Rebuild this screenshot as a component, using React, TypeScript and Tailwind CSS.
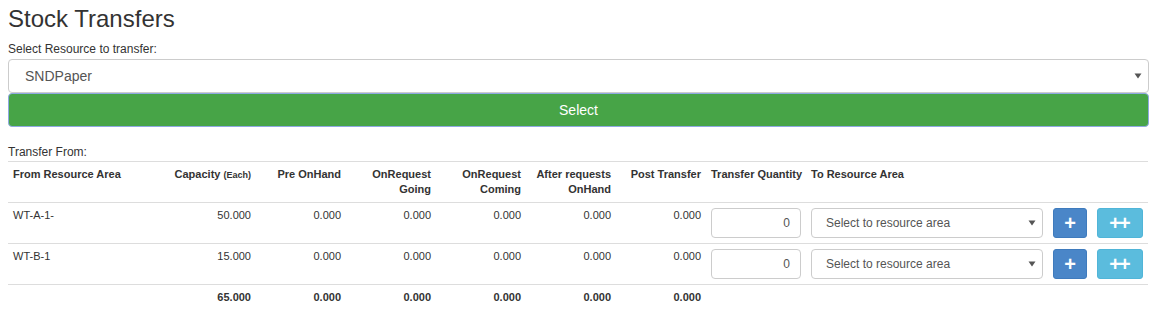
import React from "react";

type Row = {
    area: string;
    capacity: string;
    preOnHand: string;
    going: string;
    coming: string;
    after: string;
    post: string;
};

const rows: Row[] = [
    { area: "WT-A-1-", capacity: "50.000", preOnHand: "0.000", going: "0.000", coming: "0.000", after: "0.000", post: "0.000" },
    { area: "WT-B-1", capacity: "15.000", preOnHand: "0.000", going: "0.000", coming: "0.000", after: "0.000", post: "0.000" },
];

function Caret() {
    return (
        <svg width="8" height="6" viewBox="0 0 8 6" className="absolute top-1/2 -translate-y-1/2 right-[6px]">
            <path d="M0.5 0.5 L7.5 0.5 L4 5.5 Z" fill="#555" />
        </svg>
    );
}

function AreaSelect() {
    return (
        <div className="relative h-[30px] w-[232px] border border-[#ccc] rounded-[4px] bg-white text-[12px] leading-[28px] text-[#555] pl-[14px]">
            Select to resource area
            <Caret />
        </div>
    );
}

/** One line of the transfer table */
function TransferRow({ row }: { row: Row }) {
    const num = "px-[5px] py-[5px] text-right align-top";
    return (
        <tr className="border-t border-[#ddd]">
            <td className="px-[5px] py-[5px] align-top">{row.area}</td>
            <td className={num}>{row.capacity}</td>
            <td className={num}>{row.preOnHand}</td>
            <td className={num}>{row.going}</td>
            <td className={num}>{row.coming}</td>
            <td className={num}>{row.after}</td>
            <td className={num}>{row.post}</td>
            <td className="px-[5px] py-[5px] align-top">
                <div className="h-[30px] w-[90px] border border-[#ccc] rounded-[4px] bg-white text-[12px] leading-[28px] text-[#555] text-right pr-[10px]">
                    0
                </div>
            </td>
            <td className="px-[5px] py-[5px] align-top">
                <AreaSelect />
            </td>
            <td className="px-[5px] py-[5px] align-top">
                <button className="h-[30px] w-[34px] rounded-[3px] bg-[#4a86c8] border border-[#3f7bbd] text-white text-[20px] font-bold leading-[26px]">
                    +
                </button>
            </td>
            <td className="px-[5px] py-[5px] align-top">
                <button className="h-[30px] w-[46px] rounded-[3px] bg-[#5bbcdd] border border-[#50b5d8] text-white text-[20px] font-bold leading-[26px] tracking-[-2px] pr-[2px]">
                    ++
                </button>
            </td>
        </tr>
    );
}

export default function App() {
    const th = "px-[5px] py-[5px] font-bold text-right align-top";
    const foot = "px-[5px] py-[5px] font-bold text-right align-top";
    return (
        <div className="w-[1157px] h-[335px] bg-white px-2 font-['Liberation_Sans',Arial,sans-serif] text-[#333]">
            <h3 className="pt-[6px] text-[24px] leading-[26px]">Stock Transfers</h3>
            <div className="mt-[9px] text-[12px] leading-[17px]">Select Resource to transfer:</div>

            <div className="relative mt-[1px] h-[34px] border border-[#ccc] rounded-[4px] bg-white pl-[16px] text-[14px] leading-[32px] text-[#555]">
                SNDPaper
                <Caret />
            </div>
            <button className="w-full h-[34px] rounded-[4px] border border-[#8fa9e2] bg-[#47a447] text-white text-[14px] leading-[32px]">
                Select
            </button>

            <div className="mt-[17px] text-[12px] leading-[17px]">Transfer From:</div>
            <table className="w-[1140px] table-fixed border-collapse text-[11px] leading-[15px]">
                <colgroup>
                    <col className="w-[158px]" />
                    <col className="w-[90px]" />
                    <col className="w-[90px]" />
                    <col className="w-[90px]" />
                    <col className="w-[90px]" />
                    <col className="w-[90px]" />
                    <col className="w-[90px]" />
                    <col className="w-[100px]" />
                    <col className="w-[242px]" />
                    <col className="w-[44px]" />
                    <col className="w-[56px]" />
                </colgroup>
                <thead>
                    <tr className="border-t border-[#ddd]">
                        <th className="px-[5px] py-[5px] font-bold text-left align-top">From Resource Area</th>
                        <th className={th}>
                            Capacity <small className="text-[9px]">(Each)</small>
                        </th>
                        <th className={th}>Pre OnHand</th>
                        <th className={th}>
                            OnRequest
                            <br />
                            Going
                        </th>
                        <th className={th}>
                            OnRequest
                            <br />
                            Coming
                        </th>
                        <th className={th}>
                            After requests
                            <br />
                            OnHand
                        </th>
                        <th className={th}>Post Transfer</th>
                        <th className="px-[5px] py-[5px] font-bold text-left align-top whitespace-nowrap">Transfer Quantity</th>
                        <th className="px-[5px] py-[5px] font-bold text-left align-top">To Resource Area</th>
                        <th />
                        <th />
                    </tr>
                </thead>
                <tbody>
                    {rows.map((r) => (
                        <TransferRow key={r.area} row={r} />
                    ))}
                </tbody>
                <tfoot>
                    <tr className="border-t border-[#ddd]">
                        <td />
                        <td className={foot}>65.000</td>
                        <td className={foot}>0.000</td>
                        <td className={foot}>0.000</td>
                        <td className={foot}>0.000</td>
                        <td className={foot}>0.000</td>
                        <td className={foot}>0.000</td>
                        <td colSpan={4} />
                    </tr>
                </tfoot>
            </table>
        </div>
    );
}
